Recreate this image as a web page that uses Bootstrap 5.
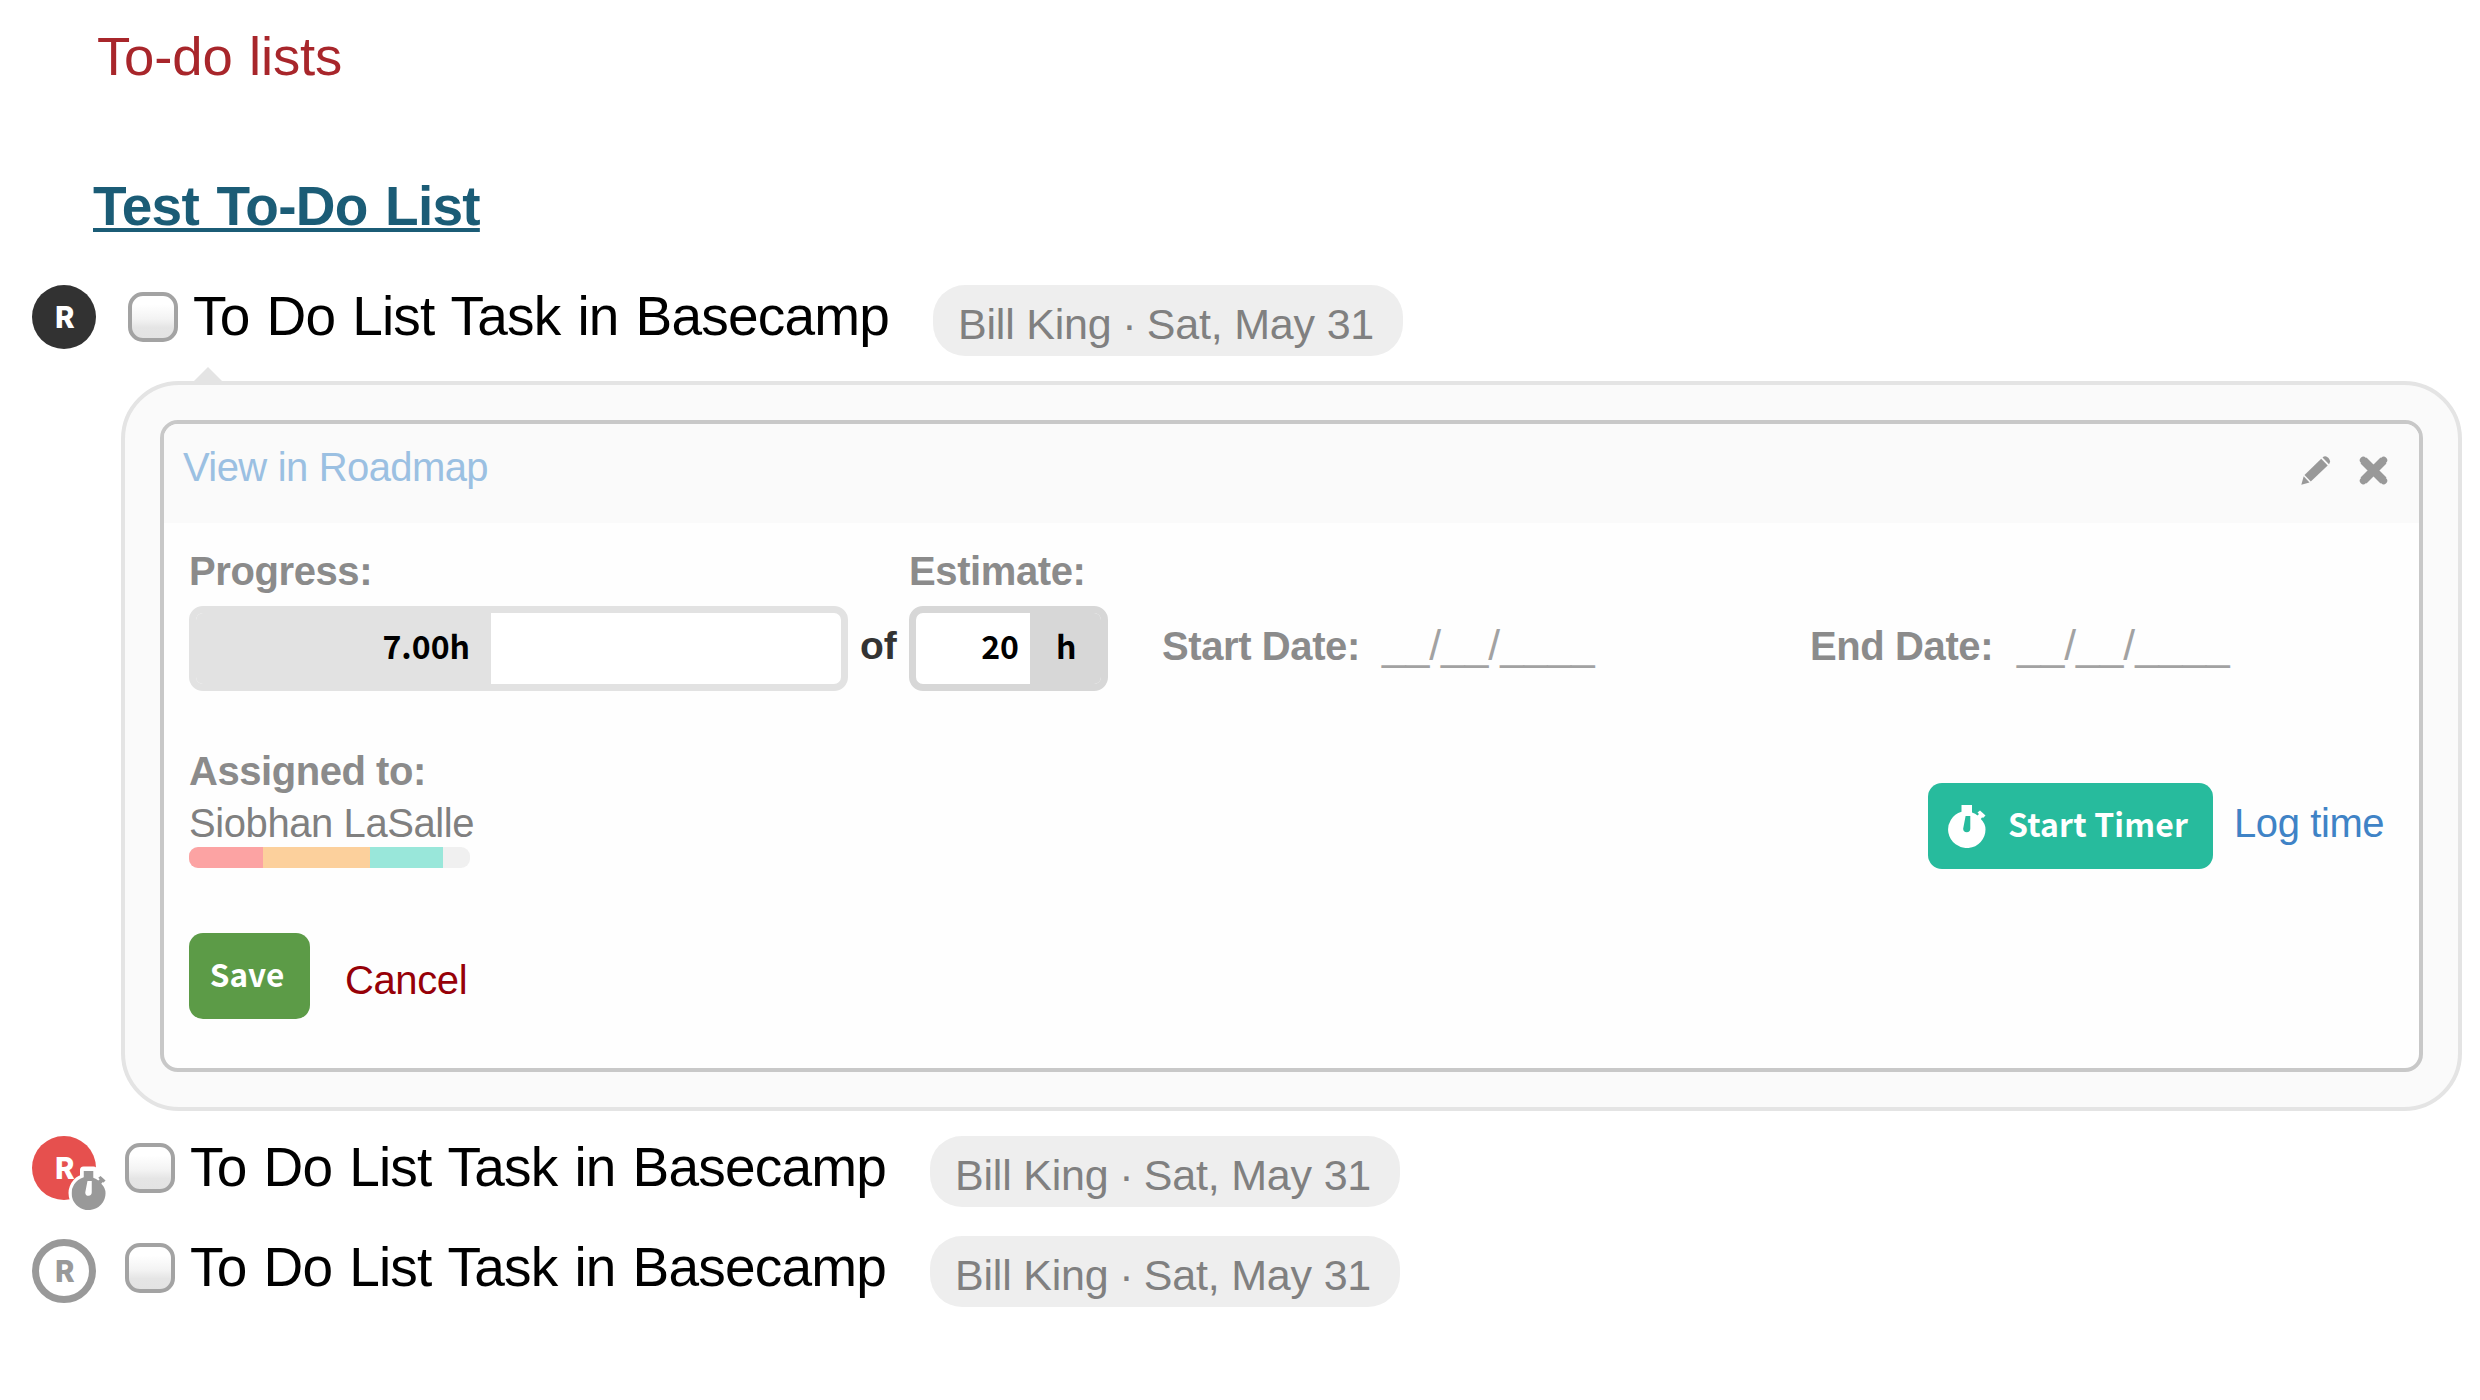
<!DOCTYPE html>
<html lang="en">
<head>
<meta charset="utf-8">
<title>To-do lists</title>
<link href="https://cdn.jsdelivr.net/npm/bootstrap@5.3.0/dist/css/bootstrap.min.css" rel="stylesheet">
<style>
body{font-family:"Liberation Sans",Arial,sans-serif;background:#fff;color:#000;width:2480px;height:1400px;overflow:hidden}
.src-sans{font-family:"Noto Sans CJK SC",sans-serif;font-weight:700}
.page-heading{font-size:54.5px;line-height:60px;color:#a8262b;padding-top:27px;margin:0 0 0 97px;font-weight:400;word-spacing:1.5px;letter-spacing:-.15px}
.list-heading{font-size:55px;line-height:60px;margin:89px 0 0 93px;font-weight:700;letter-spacing:-.75px;word-spacing:3px}
.list-heading a{color:#1b5c76;text-decoration:underline;text-decoration-thickness:4px;text-underline-offset:3px;text-decoration-skip-ink:none}
.todo-row{height:72px;padding-left:32px;margin-top:28px}
.todo-row.first{margin-top:49px}
.todo-row.after-box{margin-top:25px}
.round-r{width:64px;height:64px;font-size:29px;font-weight:900;line-height:60px;color:#fff;background:#323232;position:relative;padding-left:1px}
.round-r.running{background:#e6504e}
.round-r.idle{background:#fff;border:7px solid #999;color:#999;line-height:46px;margin-top:3px}
.tick{width:50px;height:50px;border:4px solid #a3a3a3;border-radius:15px;background:linear-gradient(#fff 20%,#f3f3f3 55%,#e5e5e5 75%,#e3e3e3);margin:7px 14px 0 29px}
.first .tick{margin-left:32px}
.todo-text{width:741px;font-size:55px;line-height:63.5px;letter-spacing:-.8px;word-spacing:2.5px;white-space:nowrap;padding-left:1px}
.who-pill{width:470px;height:71px;border-radius:32px;background:#eee;color:#808080;font-size:43px;line-height:78px;letter-spacing:-.2px;padding-left:25px;white-space:nowrap}
.who-pill i{font-style:normal;margin:0 -1.2px}
.watch{position:absolute;left:34.5px;top:29px}
.outer-box{width:2341px;height:730px;margin:24px 0 0 121px;border:4px solid #e4e4e4;border-radius:58px;background:#fafafa;padding:35px;position:relative}
.pointer{position:absolute;left:68px;top:-18px}
.inner-box{width:2263px;height:652px;border:4px solid #c8c8c8;border-radius:18px;background:#fefefe;overflow:hidden}
.box-head{height:99px;background:#fafafa;padding:0 31px 0 19px}
.box-head a{font-size:40px;line-height:87px;letter-spacing:-.6px;word-spacing:.6px;color:#9bc0e2;text-decoration:none}
.head-icons{padding-top:32px;gap:28px}
.box-body{padding:25px 0 0 25px}
.lbl{font-size:40px;line-height:46px;font-weight:700;letter-spacing:-.4px;color:#8b8b8b;white-space:nowrap}
.field-lbl{height:58px}
.progress-field{width:659px}
.bar-box{width:659px;height:85px;border:7px solid #e2e2e2;border-radius:14px;background:#fff;overflow:hidden}
.bar-fill{background:#e2e2e2;font-size:32px;line-height:65px;padding-right:21px;color:#000}
.est-field{width:253px}
.est-box{width:199px;height:85px;border:7px solid #d7d7d7;border-radius:14px;background:#fff;overflow:hidden;font-size:32px;line-height:65px;color:#000}
.est-num{width:114px;padding-right:11px}
.est-unit{width:71px;background:#d7d7d7;padding-left:26px}
.of-word{width:61px;font-size:39px;font-weight:700;color:#333;line-height:84px;padding-left:12px;margin-top:56px}
.date-wrap{margin-top:56px}
.date-wrap .lbl{line-height:85px}
.start-date{width:648px}
.start-date .lbl{width:220px}
.end-date .lbl{width:207px}
.date-blank{font-size:42.5px;color:#a2a2a2;line-height:83px;white-space:nowrap}
.people-row{margin-top:57px}
.people-row .lbl{height:53px;letter-spacing:-.45px}
.person{font-size:40px;line-height:45px;height:46px;letter-spacing:-.42px;color:#808080;white-space:nowrap}
.load-bar{width:281px;height:21px;border-radius:9px;background:#f0f0f0;overflow:hidden}
.timer-box{margin:35px 35px 0 0}
.btn-flat{height:86px;border:0;border-radius:14px;color:#fff;font-size:32px;line-height:79px;padding:0 0 6px}
.btn-timer,.btn-timer:hover{width:285px;background:#27bb9d;padding:0 0 0 20px}
.btn-timer svg{margin-right:22px}
.btn-timer span{letter-spacing:.15px;padding-bottom:5px}
.btn-save,.btn-save:hover{width:121px;background:#5c9b47;padding-right:5px;font-size:31.5px}
.save-row{margin-top:64px}
.lnk{font-size:40px;letter-spacing:-.4px;text-decoration:none;white-space:nowrap}
.lnk-log{color:#3f83c6;margin-left:21px;width:150px;line-height:81px}
.lnk-cancel{color:#960008;margin-left:35px;line-height:94px}
</style>
<script src="https://cdn.jsdelivr.net/npm/bootstrap@5.3.0/dist/js/bootstrap.bundle.min.js"></script>
</head>
<body>
<svg width="0" height="0" class="position-absolute">
  <symbol id="stopwatch" viewBox="0 0 38 43">
    <path d="M13.500 0H24V7.500Q27.500 8.500 29.500 10.500L31 9L29.500 7.500L32 5.500L37.500 10.500L35.300 12.800L34 12.500L32.800 14Q37.500 18.500 37.500 24.500A18.700 18.500 0 1 1 13.500 6.800ZM17.600 11L15.200 23.500Q15 27.300 18.800 27.300Q22.200 27.300 22.300 23.500V11Z" fill="currentColor" fill-rule="evenodd"/>
  </symbol>
</svg>
<h1 class="page-heading">To-do lists</h1>
<h2 class="list-heading mb-0"><a href="#">Test To-Do List</a></h2>

<div class="todo-row first d-flex align-items-start">
  <div class="round-r src-sans rounded-circle text-center flex-shrink-0">R</div>
  <div class="tick flex-shrink-0"></div>
  <div class="todo-text flex-shrink-0">To Do List Task in Basecamp</div>
  <div class="who-pill flex-shrink-0">Bill King <i>·</i> Sat, May 31</div>
</div>

<section class="outer-box">
  <svg class="pointer" width="30" height="14" viewBox="0 0 30 14"><path d="M15 0L29 14H1Z" fill="#e4e4e4"/></svg>
  <div class="inner-box">
    <header class="box-head d-flex justify-content-between">
      <a href="#">View in Roadmap</a>
      <div class="head-icons d-flex">
        <svg width="30" height="29" viewBox="0 0 30 29"><g fill="#999"><path d="M21.500 1.500Q24.500-1 27.500 2Q30.300 5 28 8.200Z"/><path d="M20.200 2.700L26.700 9.500L9.800 25.600L3.500 19Z"/><path d="M2.700 20.300L8.500 26.500L.3 28.800Z"/></g></svg>
        <svg width="29" height="29" viewBox="0 0 29 29"><path d="M4.500 4.500L24.500 24.500M24.500 4.500L4.500 24.500" stroke="#999" stroke-width="8.400"/><path d="M4.300 4.300L24.700 24.700M24.700 4.300L4.300 24.700" stroke="#999" stroke-width="7" stroke-linecap="round"/></svg>
      </div>
    </header>
    <div class="box-body">
      <div class="d-flex align-items-start">
        <div class="progress-field">
          <div class="lbl field-lbl">Progress:</div>
          <div class="bar-box"><div class="bar-fill src-sans text-end h-100" style="width:295px">7.00h</div></div>
        </div>
        <div class="of-word">of</div>
        <div class="est-field">
          <div class="lbl field-lbl">Estimate:</div>
          <div class="est-box src-sans d-flex"><div class="est-num text-end">20</div><div class="est-unit">h</div></div>
        </div>
        <div class="date-wrap start-date d-flex"><div class="lbl">Start Date:</div><div class="date-blank">__/__/____</div></div>
        <div class="date-wrap end-date d-flex"><div class="lbl">End Date:</div><div class="date-blank">__/__/____</div></div>
      </div>
      <div class="people-row d-flex justify-content-between align-items-start">
        <div>
          <div class="lbl">Assigned to:</div>
          <div class="person">Siobhan LaSalle</div>
          <div class="load-bar d-flex">
            <div style="width:73.5px;background:#fca3a3"></div><div style="width:107px;background:#fcd09c"></div><div style="width:73.5px;background:#99e7da"></div>
          </div>
        </div>
        <div class="timer-box d-flex align-items-start">
          <button class="btn btn-flat btn-timer src-sans d-flex align-items-center"><svg width="38" height="43"><use href="#stopwatch"/></svg><span>Start Timer</span></button>
          <a href="#" class="lnk lnk-log">Log time</a>
        </div>
      </div>
      <div class="save-row d-flex align-items-start">
        <button class="btn btn-flat btn-save src-sans">Save</button>
        <a href="#" class="lnk lnk-cancel">Cancel</a>
      </div>
    </div>
  </div>
</section>

<div class="todo-row after-box d-flex align-items-start">
  <div class="round-r running src-sans rounded-circle text-center flex-shrink-0">R
    <svg class="watch" width="46" height="50" viewBox="-4 -4 46 50"><g transform="translate(.5 1)"><path d="M12 0H22V7Q25 8 26.500 9.300L28 8L33 13L31 14.500Q34 19 33.500 24A16.500 16.500 0 1 1 12 7.500Z" fill="#fff" stroke="#fff" stroke-width="7" stroke-linejoin="round"/><use href="#stopwatch" width="34.500" height="41" color="#999"/></g></svg>
  </div>
  <div class="tick flex-shrink-0"></div>
  <div class="todo-text flex-shrink-0">To Do List Task in Basecamp</div>
  <div class="who-pill flex-shrink-0">Bill King <i>·</i> Sat, May 31</div>
</div>
<div class="todo-row d-flex align-items-start">
  <div class="round-r idle src-sans rounded-circle text-center flex-shrink-0">R</div>
  <div class="tick flex-shrink-0"></div>
  <div class="todo-text flex-shrink-0">To Do List Task in Basecamp</div>
  <div class="who-pill flex-shrink-0">Bill King <i>·</i> Sat, May 31</div>
</div>
</body>
</html>
